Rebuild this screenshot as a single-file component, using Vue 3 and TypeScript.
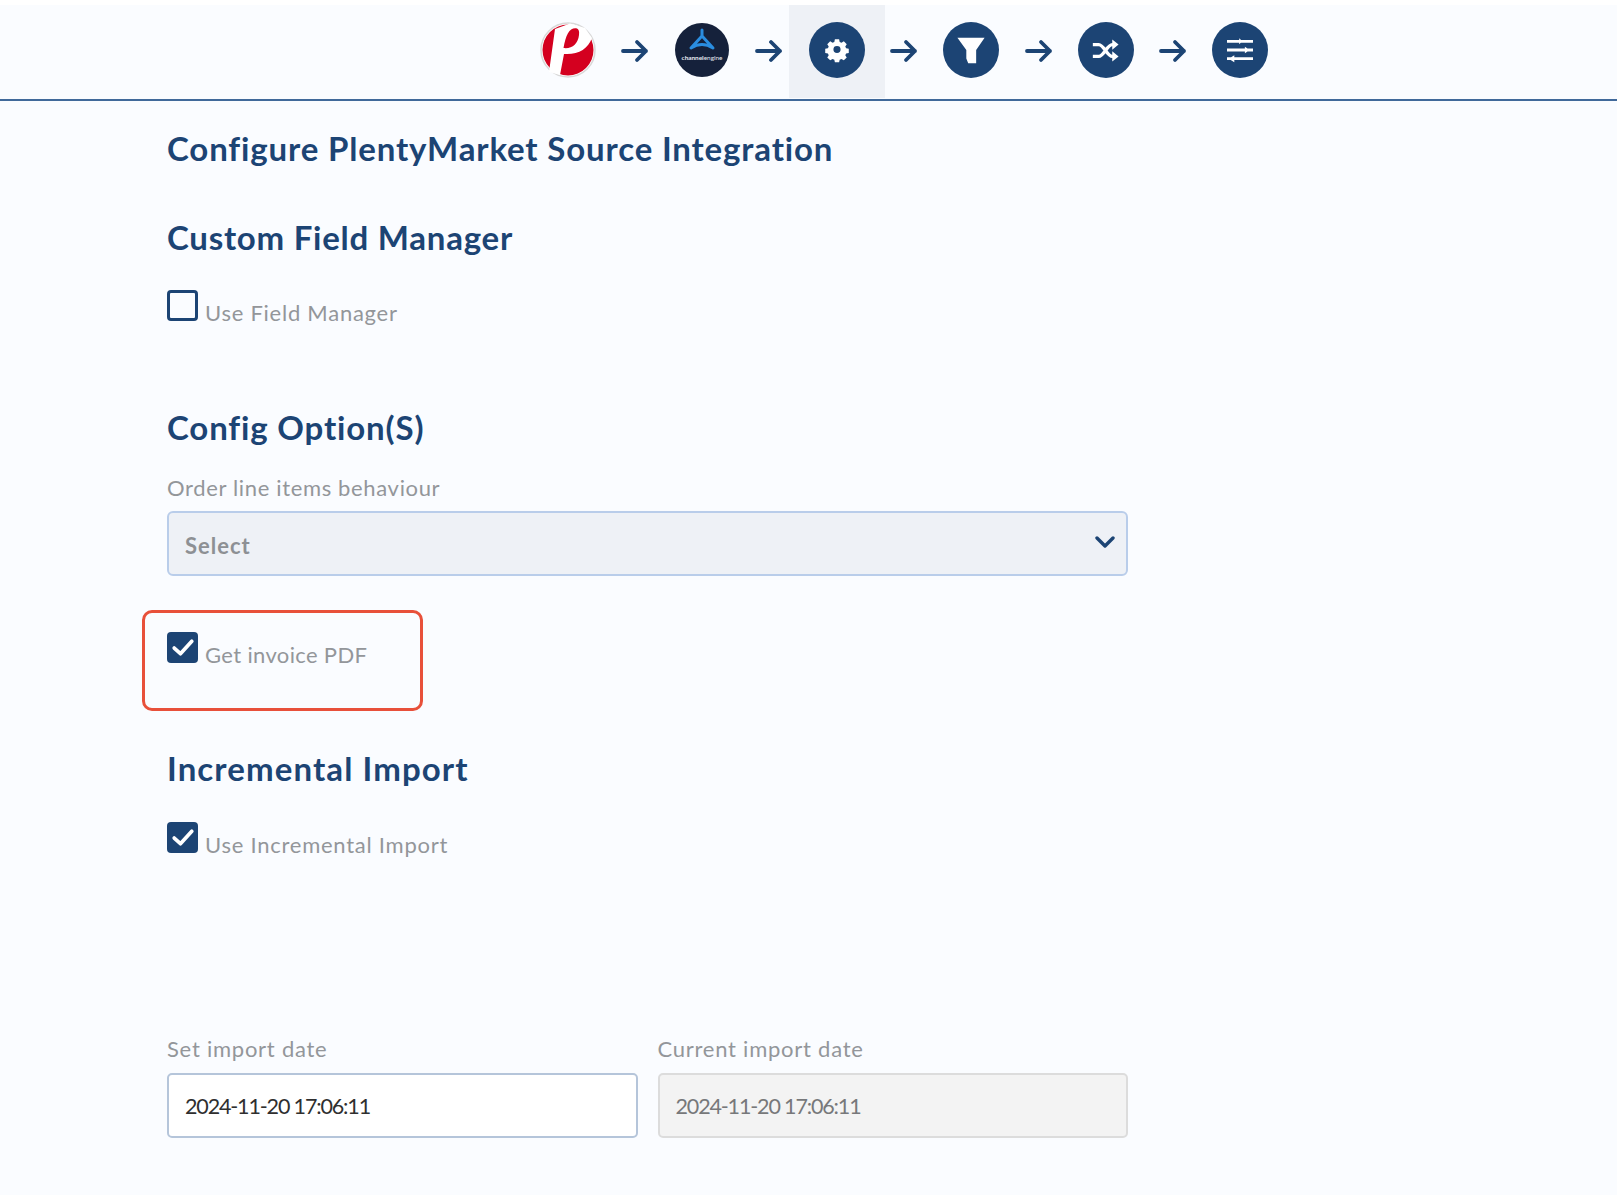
<script setup lang="ts">
const dateValue = '2024-11-20 17:06:11'
</script>

<template>
  <div class="page">
    <header class="stepper">
      <div class="step">
        <svg class="logo" viewBox="0 0 56 56">
          <circle cx="28" cy="28" r="27" fill="#fff" stroke="#d8d8d8" stroke-width="1.5" />
          <circle cx="28" cy="28" r="25.5" fill="#d4001f" />
          <path d="M15 7 L30 1.5 L45 6 L52 16 C48 27 38 33 24 32 L20 53 L9 50 Z" fill="#fff" />
          <path d="M37 6.5 C30 5 26 12 23.5 26 C32 27 38 22 39 13 C39.5 9 38.5 7 37 6.5 Z" fill="#d4001f" />
        </svg>
      </div>
      <svg class="arrow" viewBox="0 0 28 24"><path d="M2 12 H25 M16 3 L25 12 L16 21" /></svg>
      <div class="step">
        <svg class="logo" viewBox="0 0 56 56">
          <circle cx="28" cy="28" r="27" fill="#15213b" />
          <path class="logo-mark" d="M28 8 V14 L17 26 Q28 19 39 26 L28 14" />
          <text x="28" y="38" text-anchor="middle" class="logo-text"><tspan font-weight="700">channel</tspan>engine</text>
        </svg>
      </div>
      <svg class="arrow" viewBox="0 0 28 24"><path d="M2 12 H25 M16 3 L25 12 L16 21" /></svg>
      <div class="step step-active">
        <span class="circle">
          <svg viewBox="0 0 32 32" class="glyph">
            <path fill="#fff" fill-rule="evenodd" d="M13.4 4 h5.2 l.7 3.3 2.2 1 2.9-1.8 3.6 3.7-1.8 2.8 1 2.3 3.3.7 v5.2 l-3.3.7-1 2.2 1.8 2.9-3.6 3.6-2.9-1.8-2.2 1-.7 3.3 h-5.2 l-.7-3.3-2.2-1-2.9 1.8-3.6-3.6 1.8-2.9-1-2.2-3.3-.7 v-5.2 l3.3-.7 1-2.3-1.8-2.8 3.6-3.7 2.9 1.8 2.2-1 z M16 12.6 a4.4 4.4 0 1 0 0 8.8 a4.4 4.4 0 1 0 0-8.8 z" transform="translate(0 -1) scale(1 .97)" />
          </svg>
        </span>
      </div>
      <svg class="arrow" viewBox="0 0 28 24"><path d="M2 12 H25 M16 3 L25 12 L16 21" /></svg>
      <div class="step">
        <span class="circle">
          <svg viewBox="0 0 32 32" class="glyph glyph-filter"><path fill="#fff" d="M1.5 3 H30.5 L21.5 16 V30 H13 L11 25 V16 Z" /></svg>
        </span>
      </div>
      <svg class="arrow" viewBox="0 0 28 24"><path d="M2 12 H25 M16 3 L25 12 L16 21" /></svg>
      <div class="step">
        <span class="circle">
          <svg viewBox="0 0 32 32" class="glyph glyph-shuffle">
            <path fill="none" stroke="#fff" stroke-width="4" d="M1 9 H8 C14 9 18 23 24 23 H26 M1 23 H8 C14 23 18 9 24 9 H26" />
            <path fill="#fff" d="M24 3 L31.5 9 L24 15 Z M24 17 L31.5 23 L24 29 Z" />
          </svg>
        </span>
      </div>
      <svg class="arrow" viewBox="0 0 28 24"><path d="M2 12 H25 M16 3 L25 12 L16 21" /></svg>
      <div class="step">
        <span class="circle">
          <svg viewBox="0 0 32 32" class="glyph">
            <path fill="#fff" d="M0 3.6 H32 V7 H0 Z M0 14.3 H32 V17.7 H0 Z M0 25 H32 V28.4 H0 Z M15 1.5 L19 5.3 L15 9 Z M22 12 L28 16 L22 20 Z M2 26.7 L9 22.5 V31 Z" />
          </svg>
        </span>
      </div>
    </header>

    <main class="content">
      <h1 class="title">Configure PlentyMarket Source Integration</h1>

      <section class="field-manager">
        <h2 class="heading">Custom Field Manager</h2>
        <label class="check-row">
          <span class="box"></span>
          <span class="check-label">Use Field Manager</span>
        </label>
      </section>

      <section class="options">
        <h2 class="heading">Config Option(S)</h2>
        <div class="field-label">Order line items behaviour</div>
        <div class="select">
          <span>Select</span>
          <svg class="chevron" viewBox="0 0 20 12"><path d="M2 2 L10 10 L18 2" /></svg>
        </div>
        <div class="highlighted">
          <label class="check-row">
            <span class="box box-on">
              <svg viewBox="0 0 30 30"><path d="M7 15.5 L13 21 L24 9" /></svg>
            </span>
            <span class="check-label check-label-tight">Get invoice PDF</span>
          </label>
          <div class="annotation"></div>
        </div>
      </section>

      <section class="incremental">
        <h2 class="heading">Incremental Import</h2>
        <label class="check-row">
          <span class="box box-on">
            <svg viewBox="0 0 30 30"><path d="M7 15.5 L13 21 L24 9" /></svg>
          </span>
          <span class="check-label">Use Incremental Import</span>
        </label>
      </section>

      <section class="dates">
        <div class="date-field">
          <div class="field-label date-label">Set import date</div>
          <div class="input">{{ dateValue }}</div>
        </div>
        <div class="date-field">
          <div class="field-label date-label">Current import date</div>
          <div class="input input-disabled">{{ dateValue }}</div>
        </div>
      </section>
    </main>
  </div>
</template>

<style scoped>
.page {
  width: 1617px;
  height: 1195px;
  box-sizing: border-box;
  padding-top: 5px;
  overflow: hidden;
  background: #fafcff;
  font-family: "Lato", "Open Sans", sans-serif;
  color: #1c4474;
  position: relative;
}
.page::before {
  content: "";
  position: absolute;
  left: 0;
  top: 0;
  right: 0;
  height: 5px;
  background: #fff;
}
.stepper {
  height: 96px;
  box-sizing: border-box;
  border-bottom: 2px solid #40699a;
  padding-left: 538.5px;
  display: flex;
  align-items: flex-start;
}
.step {
  width: 58px;
  height: 93px;
  box-sizing: border-box;
  padding-bottom: 3px;
  display: flex;
  align-items: center;
  justify-content: center;
  flex: none;
}
.step-active {
  width: 96px;
  margin: 0 -19px;
  background: #eef1f6;
}
.logo {
  width: 56px;
  height: 56px;
}
.logo-mark {
  fill: none;
  stroke: #2a8de0;
  stroke-width: 3;
  stroke-linejoin: round;
  stroke-linecap: round;
}
.logo-text {
  font-family: "Lato", sans-serif;
  font-size: 6.4px;
  fill: #e8ebf2;
}
.circle {
  width: 56px;
  height: 56px;
  border-radius: 50%;
  background: #1c4474;
  display: flex;
  align-items: center;
  justify-content: center;
}
.glyph {
  width: 26px;
  height: 26px;
}
.glyph-filter {
  width: 30px;
  height: 30px;
}
.glyph-shuffle {
  width: 27px;
  height: 27px;
}
.arrow {
  width: 28px;
  height: 24px;
  flex: none;
  margin: 34px 24.3px 0;
  fill: none;
  stroke: #1c4474;
  stroke-width: 3.8;
  stroke-linecap: round;
  stroke-linejoin: round;
}
.content {
  width: 961px;
  margin-left: 167px;
}
.title,
.heading {
  margin: 0;
  font-size: 33px;
  line-height: 40px;
  font-weight: 700;
  letter-spacing: 0.85px;
}
.title {
  margin-top: 27px;
}
.field-manager {
  margin-top: 49px;
}
.field-manager .heading {
  letter-spacing: 0.75px;
}
.check-row {
  display: flex;
  align-items: flex-start;
  gap: 7px;
}
.field-manager .check-row {
  margin-top: 33px;
}
.box {
  width: 31px;
  height: 31px;
  box-sizing: border-box;
  border: 3px solid #1c4474;
  border-radius: 4px;
  flex: none;
}
.box-on {
  background: #1c4474;
  border: none;
}
.box-on svg {
  display: block;
  width: 31px;
  height: 31px;
  fill: none;
  stroke: #fff;
  stroke-width: 3.6;
  stroke-linecap: round;
  stroke-linejoin: round;
}
.check-label {
  margin-top: 9px;
  font-size: 22px;
  line-height: 28px;
  color: #93969a;
  font-weight: 400;
  letter-spacing: 0.75px;
}
.check-label-tight {
  letter-spacing: 0.35px;
}
.options {
  margin-top: 80px;
}
.field-label {
  font-size: 22px;
  line-height: 28px;
  color: #93969a;
  letter-spacing: 0.65px;
}
.date-label {
  letter-spacing: 0.75px;
}
.options .field-label {
  margin-top: 27px;
}
.select {
  margin-top: 9px;
  height: 65px;
  box-sizing: border-box;
  border: 2px solid #b9cdea;
  border-radius: 6px;
  background: #eef1f6;
  display: flex;
  align-items: center;
  justify-content: space-between;
  padding: 3px 11px 0 16px;
  font-size: 22px;
  font-weight: 700;
  color: #8d9094;
  letter-spacing: 1px;
}
.chevron {
  width: 20px;
  height: 12px;
  margin-top: -6px;
  fill: none;
  stroke: #1c4474;
  stroke-width: 3.4;
  stroke-linecap: round;
  stroke-linejoin: round;
}
.highlighted {
  position: relative;
  margin-top: 56px;
  height: 101px;
}
.annotation {
  position: absolute;
  left: -25px;
  top: -22px;
  width: 281px;
  height: 101px;
  box-sizing: border-box;
  border: 3px solid #e8503a;
  border-radius: 10px;
}
.incremental {
  margin-top: 15px;
}
.incremental .heading {
  letter-spacing: 1.1px;
}
.incremental .check-row {
  margin-top: 34px;
}
.dates {
  margin-top: 176px;
  display: flex;
  gap: 20px;
}
.date-field {
  flex: 1;
}
.input {
  margin-top: 10px;
  height: 65px;
  box-sizing: border-box;
  border: 2px solid #b5c5da;
  border-radius: 5px;
  background: #fff;
  display: flex;
  align-items: center;
  padding-left: 16px;
  font-size: 21.5px;
  letter-spacing: -1.15px;
  color: #2f2f2f;
}
.input-disabled {
  background: #f3f3f3;
  border-color: #dcdcdc;
  color: #77787a;
}
</style>

<style>
html, body {
  margin: 0;
  background: #fafcff;
}
</style>
